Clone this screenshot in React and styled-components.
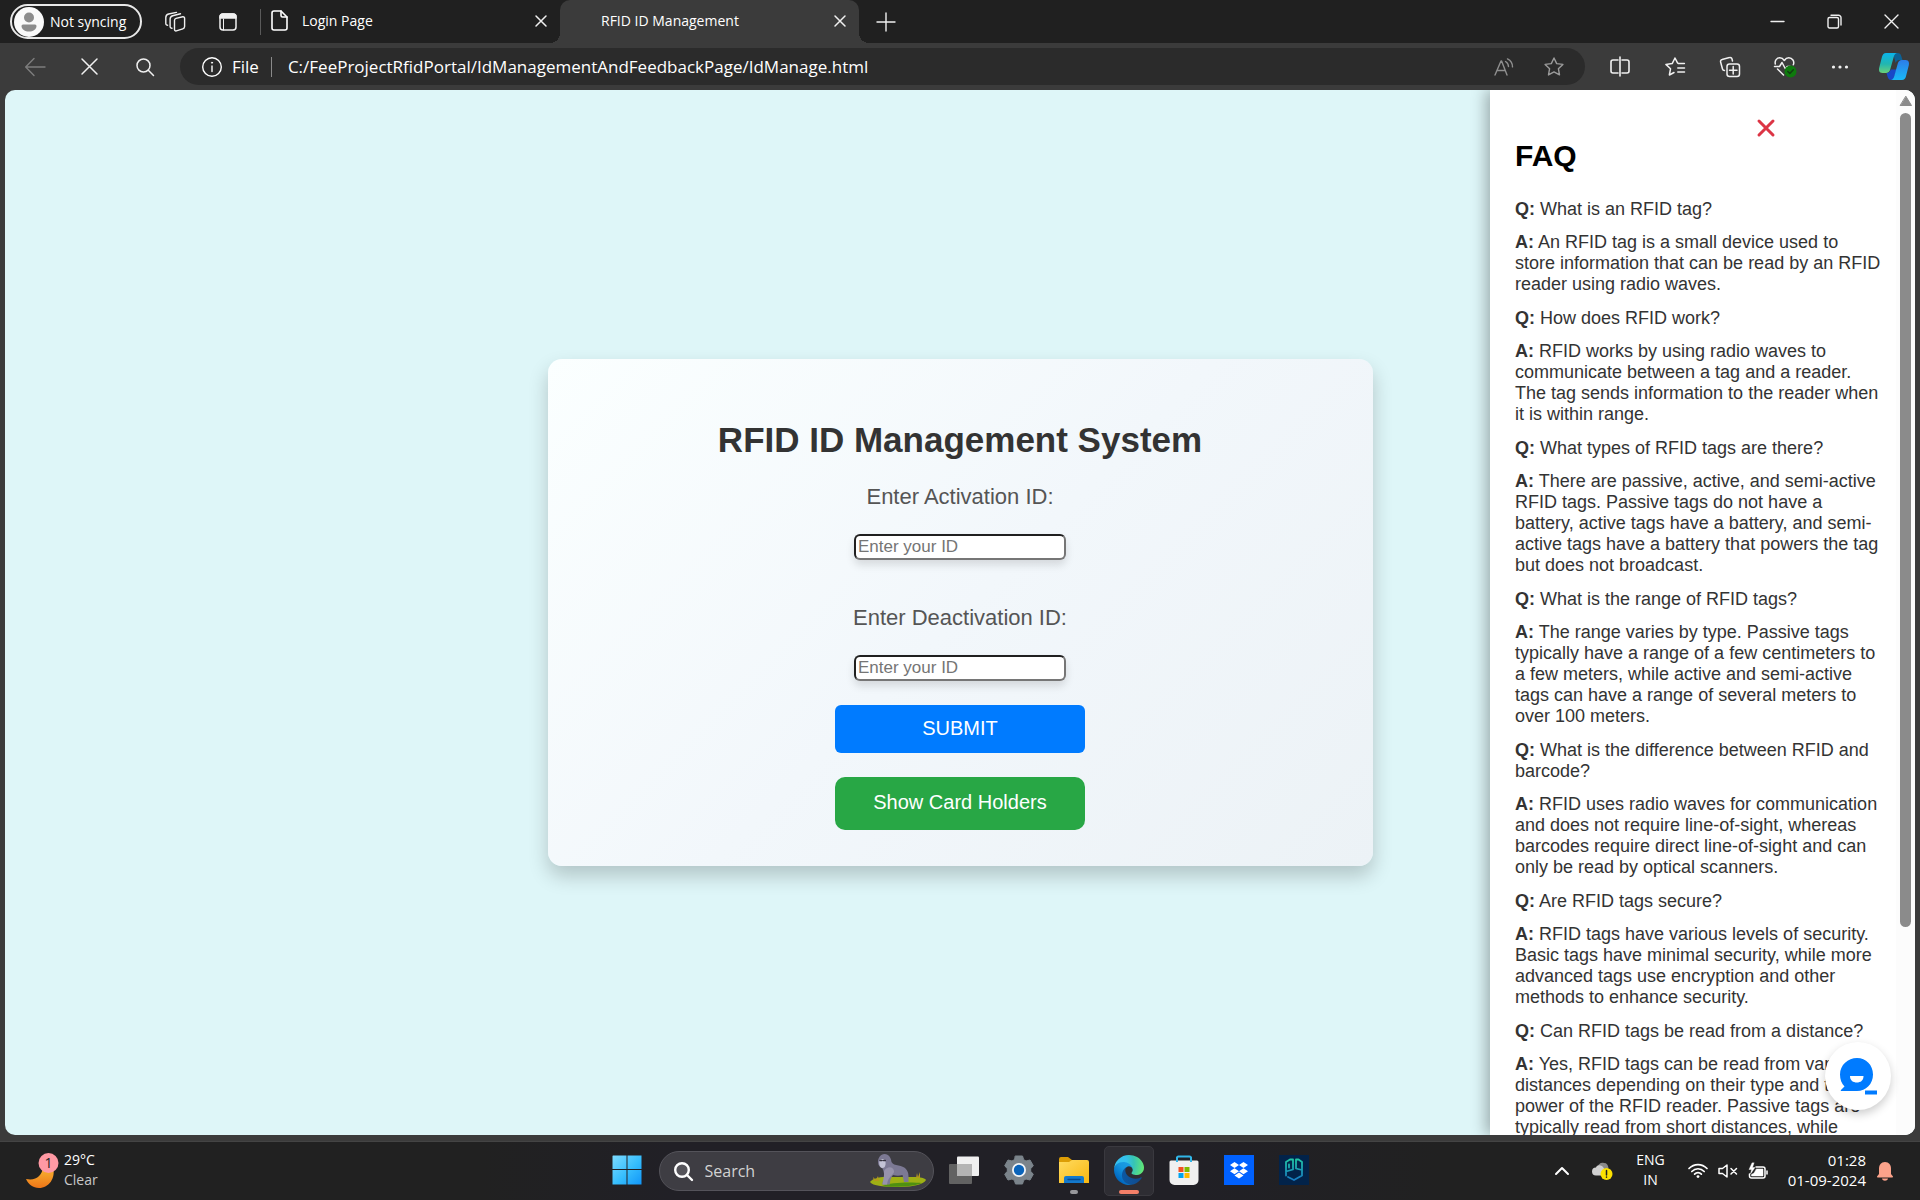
import React from "react";
import styled, { createGlobalStyle } from "styled-components";

const UI = '"Open Sans", "Noto Sans", sans-serif';
const BODY = '"Liberation Sans", Arial, sans-serif';

const GlobalStyle = createGlobalStyle`
  *, *::before, *::after { box-sizing: border-box; }
  body { margin: 0; background: #3b3b3b; font-family: ${BODY}; overflow: hidden; }
  h1, h2, p { margin: 0; }
  button { font: inherit; color: inherit; border: 0; padding: 0; background: none; cursor: pointer; }
  svg { display: block; flex: none; overflow: visible; }
`;

const Desktop = styled.div`
  display: flex;
  flex-direction: column;
  height: 100vh;
`;

/* ---------- browser tab strip ---------- */

const TabStrip = styled.header`
  display: flex;
  align-items: center;
  height: 43px;
  flex: none;
  padding-left: 10px;
  background: #202020;
  color: #fff;
  font: 14px/20px ${UI};
`;

const Profile = styled.button`
  display: flex;
  align-items: center;
  gap: 6px;
  width: 132px;
  height: 35px;
  margin-right: 6px;
  padding-left: 2px;
  border: 2px solid #e8e8e8;
  border-radius: 18px;
  white-space: nowrap;
`;

const IconButton = styled.button`
  display: grid;
  place-items: center;
  flex: none;
  width: ${(p) => p.$width || 55}px;
  height: 36px;
  color: ${(p) => p.$color || "#f0f0f0"};
`;

const StripDivider = styled.span`
  width: 1px;
  height: 26px;
  margin-left: 6px;
  background: #5a5a5a;
`;

const Tab = styled.div`
  position: relative;
  display: flex;
  align-items: center;
  align-self: stretch;
  gap: 14px;
  width: 299px;
  padding: 0 9px 2px ${(p) => (p.$active ? 41 : 10)}px;
  background: ${(p) => (p.$active ? "#3b3b3b" : "transparent")};
  border-radius: 10px 10px 0 0;

  &::before, &::after {
    content: "";
    display: ${(p) => (p.$active ? "block" : "none")};
    position: absolute;
    bottom: 0;
    width: 10px;
    height: 10px;
  }
  &::before { right: 100%; background: radial-gradient(circle at 0 0, transparent 10px, #3b3b3b 10px); }
  &::after { left: 100%; background: radial-gradient(circle at 100% 0, transparent 10px, #3b3b3b 10px); }
`;

const TabTitle = styled.span`
  flex: 1;
  white-space: nowrap;
`;

const Spacer = styled.span`
  flex: 1;
`;

/* ---------- browser toolbar ---------- */

const Toolbar = styled.nav`
  display: flex;
  align-items: center;
  height: 47px;
  flex: none;
  padding-left: 7px;
  background: #3b3b3b;
`;

const AddressBar = styled.div`
  display: flex;
  align-items: center;
  flex: 1;
  height: 37px;
  margin: 0 7px 0 8px;
  padding: 0 6px 0 22px;
  border-radius: 19px;
  background: #2b2b2b;
  color: #fff;
  font: 17px/22px ${UI};
`;

const Scheme = styled.span`
  margin: 0 12px 0 10px;
`;

const AddressDivider = styled.span`
  width: 1px;
  height: 20px;
  margin-right: 16px;
  background: #8a8a8a;
`;

const AddressInput = styled.input`
  flex: 1;
  min-width: 0;
  padding: 0;
  border: 0;
  outline: 0;
  background: none;
  color: inherit;
  font: inherit;
`;

/* ---------- web page ---------- */

const Page = styled.main`
  position: relative;
  display: grid;
  place-items: center;
  flex: 1;
  min-height: 0;
  margin: 0 5px 6px;
  border-radius: 10px;
  overflow: hidden;
  background: #def6f8;
`;

const Card = styled.form`
  display: flex;
  flex-direction: column;
  align-items: center;
  gap: 24px;
  width: 825px;
  max-width: 90%;
  padding: 61px 40px 36px;
  border-radius: 14px;
  background: linear-gradient(135deg, #fbffff 0%, #f2f7fb 50%, #ecf2f6 100%);
  box-shadow: 0 10px 20px rgba(0, 0, 0, 0.2);
`;

const CardTitle = styled.h1`
  color: #333;
  font-size: 35px;
  line-height: 40px;
`;

const Field = styled.div`
  display: flex;
  flex-direction: column;
  align-items: center;
  gap: 24px;

  & + & { margin-top: 21px; }
`;

const FieldLabel = styled.label`
  color: #555;
  font-size: 22px;
  line-height: 26px;
`;

const TextBox = styled.input`
  width: 212px;
  height: 26px;
  padding: 0 2px;
  border: 2px solid;
  border-color: #202020 #767676 #767676 #202020;
  border-radius: 6px;
  outline: 0;
  background: #fff;
  box-shadow: 0 5px 8px rgba(0, 0, 0, 0.12);
  font: 17px/20px ${BODY};

  &::placeholder { color: #757575; opacity: 1; }
`;

const ActionButton = styled.button`
  width: 250px;
  height: ${(p) => (p.$secondary ? 53 : 48)}px;
  padding-bottom: 3px;
  border-radius: ${(p) => (p.$secondary ? 10 : 6)}px;
  background: ${(p) => (p.$secondary ? "#28a745" : "#007bff")};
  color: #fff;
  font: 20px/24px ${BODY};
`;

const FaqPanel = styled.aside`
  position: absolute;
  inset: 0 0 0 auto;
  display: flex;
  width: 425px;
  background: #fff;
  box-shadow: -4px 0 14px rgba(0, 0, 0, 0.3);
`;

const FaqBody = styled.div`
  display: flex;
  flex-direction: column;
  flex: 1;
  min-width: 0;
  padding: 27px 13px 0 25px;
  overflow: hidden;
`;

const FaqClose = styled.button`
  display: grid;
  place-items: center;
  flex: none;
  align-self: flex-end;
  width: 22px;
  height: 22px;
  margin-right: 106px;
  color: #dc3545;
`;

const FaqTitle = styled.h2`
  margin-bottom: 26px;
  color: #000;
  font-size: 30px;
  line-height: 34px;
`;

const FaqLine = styled.p`
  flex: none;
  margin-bottom: ${(p) => (p.$answer ? 13 : 12)}px;
  color: #333;
  font-size: 18px;
  line-height: 21px;
`;

const ScrollTrack = styled.div`
  display: flex;
  flex-direction: column;
  align-items: center;
  gap: 7px;
  width: 19px;
  padding: 6px 0 208px;
  background: #fcfcfc;
`;

const ScrollThumb = styled.div`
  flex: 1;
  width: 11px;
  border-radius: 6px;
  background: #8b8b8b;
`;

const ChatButton = styled.button`
  position: absolute;
  right: 24px;
  bottom: 25px;
  display: grid;
  place-items: center;
  width: 66px;
  height: 68px;
  border-radius: 50%;
  background: #fff;
  box-shadow: 0 4px 10px rgba(0, 0, 0, 0.2);
`;

/* ---------- taskbar ---------- */

const Taskbar = styled.footer`
  display: grid;
  grid-template-columns: 1fr auto 1fr;
  align-items: center;
  height: 59px;
  flex: none;
  border-top: 1px solid #444;
  background: linear-gradient(90deg, #212121 0, #212121 25%, #212026 35%, #212026 62%, #212121 75%);
  color: #fff;
  font: 14px/20px ${UI};
`;

const Weather = styled.button`
  display: flex;
  align-items: center;
  gap: 4px;
  justify-self: start;
  padding-left: 25px;
  text-align: left;
`;

const Stack = styled.span`
  display: flex;
  flex-direction: column;
  align-items: ${(p) => p.$align || "flex-start"};
  padding-bottom: 2px;
`;

const Muted = styled.span`
  color: #c8c8c8;
`;

const Clock = styled(Stack)`
  font-size: 15px;
`;

const Apps = styled.div`
  display: flex;
  align-items: center;
  gap: 5px;
`;

const AppButton = styled.button`
  display: flex;
  flex-direction: column;
  align-items: center;
  justify-content: flex-end;
  gap: 5px;
  width: 50px;
  height: 50px;
  padding-bottom: 1px;
  border-radius: 5px;
  border: 1px solid ${(p) => (p.$active ? "#3a393f" : "transparent")};
  background: ${(p) => (p.$active ? "#2e2d33" : "transparent")};
`;

const AppMark = styled.span`
  width: ${(p) => (p.$state === "active" ? 20 : 8)}px;
  height: 4px;
  border-radius: 2px;
  background: ${(p) => (p.$state === "active" ? "#f47f68" : p.$state === "open" ? "#98989c" : "transparent")};
`;

const SearchBox = styled.label`
  display: flex;
  align-items: center;
  gap: 12px;
  width: 275px;
  height: 40px;
  margin-left: 2px;
  padding: 0 7px 0 14px;
  border: 1px solid #54535a;
  border-radius: 20px;
  background: #3e3d43;
`;

const SearchInput = styled.input`
  flex: 1;
  min-width: 0;
  padding: 0;
  border: 0;
  outline: 0;
  background: none;
  color: #fff;
  font: 16px/22px ${UI};

  &::placeholder { color: #d2d2d2; opacity: 1; }
`;

const Tray = styled.div`
  display: flex;
  align-items: center;
  justify-self: end;
  padding-right: 27px;
`;

const TrayButton = styled.button`
  display: flex;
  align-items: center;
  gap: 10px;
  margin-left: ${(p) => p.$space}px;
`;

/* ---------- icons ---------- */

const Icon = ({ w = 20, h = w, box = `0 0 ${w} ${h}`, children, stroke = 1.4 }) => (
  <svg width={w} height={h} viewBox={box} fill="none" stroke="currentColor" strokeWidth={stroke}
    strokeLinecap="round" strokeLinejoin="round" aria-hidden="true">
    {children}
  </svg>
);

const Cross = ({ size = 10, stroke = 1.5 }) => (
  <Icon w={size} stroke={stroke}><path d={`M0 0L${size} ${size}M${size} 0L0 ${size}`} /></Icon>
);

const Avatar = () => (
  <Icon w={30} stroke={0}>
    <circle cx="15" cy="15" r="15" fill="#fafafa" />
    <circle cx="15" cy="10.500" r="5" fill="#8c8c8c" />
    <path d="M9 17.500h12a1.500 1.500 0 0 1 1.500 1.500c0 3.500-3.500 5.500-7.500 5.500s-7.500-2-7.500-5.500a1.500 1.500 0 0 1 1.500-1.500z" fill="#8c8c8c" />
  </Icon>
);

const Workspaces = () => (
  <Icon>
    <path d="M9.500 8.300a2 2 0 0 1 1.500-1.900l6.800-1.600a1.500 1.500 0 0 1 1.800 1.500v8.200a2.500 2.500 0 0 1-1.800 2.300l-6.500 2.100a1.400 1.400 0 0 1-1.800-1.300z" />
    <path d="M7 16.300a1.800 1.800 0 0 1-1.900-1.800V7A3.500 3.500 0 0 1 7.700 3.700l7.800-1.900" />
    <path d="M2.600 13.200a1.800 1.800 0 0 1-1.800-1.800V5.700A3.800 3.800 0 0 1 3.600 2L11.500.4" />
  </Icon>
);

const TabActions = () => (
  <Icon w={18} stroke={1.5}>
    <rect x="1" y="1" width="16" height="16" rx="3" />
    <path d="M1 5V4a3 3 0 0 1 3-3h10a3 3 0 0 1 3 3v1z" fill="currentColor" />
    <path d="M4.500 6v11" strokeWidth="1" />
  </Icon>
);

const FileIcon = () => (
  <Icon w={17} h={21} stroke={1.6}>
    <path d="M3 1h7l6 6v11a2 2 0 0 1-2 2H3a2 2 0 0 1-2-2V3a2 2 0 0 1 2-2z" />
    <path d="M10 1v4.500A1.500 1.500 0 0 0 11.500 7H16" />
  </Icon>
);

const InfoIcon = () => (
  <Icon>
    <circle cx="10" cy="10" r="9.300" />
    <path d="M10 9v5.500" />
    <circle cx="10" cy="5.700" r=".6" fill="currentColor" strokeWidth=".8" />
  </Icon>
);

const Magnifier = () => (
  <Icon w={18} stroke={1.5}><circle cx="7.500" cy="7.500" r="6.500" /><path d="M12.300 12.300L17.500 17.500" /></Icon>
);

const ReadAloud = () => (
  <Icon w={20} h={18}>
    <path d="M1 17L7 3h.6L13 17M3 12.500h8.300" />
    <path d="M11.500 3.500c2 1.200 3 2.800 3 5M13.500.9c3.500 1.800 5 4.500 5 8" />
  </Icon>
);

const Star = () => (
  <Icon><path d="M10 1l2.700 5.600 6.200.8-4.500 4.300 1.100 6.200L10 14.900 4.500 17.900l1.100-6.200L1.100 7.400l6.200-.8z" /></Icon>
);

const SplitScreen = () => (
  <Icon stroke={1.6}>
    <path d="M8 3H3a2 2 0 0 0-2 2v9a2 2 0 0 0 2 2h5M12 3h5a2 2 0 0 1 2 2v9a2 2 0 0 1-2 2h-5M10 0v19" />
  </Icon>
);

const Favorites = () => (
  <Icon stroke={1.5}>
    <path d="M12.500 5.900L10 1 7.200 6.600.9 7.400l4.600 4.400-1.100 6.200L9 15.500M12.500 5.900l1 .7h5.900M12.800 11h6.700M12.800 15h6.700" />
  </Icon>
);

const Collections = () => (
  <Icon stroke={1.5}>
    <rect x="7" y="7" width="12.500" height="12.500" rx="2.500" />
    <path d="M13.200 9.500v7.500M9.500 13.200H17" />
    <path d="M4.500 13.500a2 2 0 0 1-2-1.500L.6 5a2 2 0 0 1 1.500-2.500L9.500.6A2 2 0 0 1 12 2l.5 2" />
  </Icon>
);

const Essentials = () => (
  <Icon w={22} h={20} stroke={1.5}>
    <path d="M1.300 7C.5 3.500 2.800.8 5.800.8 8 .8 9.300 2 10.300 3.500 11.300 2 12.600.8 14.800.8c3.500 0 6 3.500 4.500 7M3.500 12l6 6" />
    <path d="M.5 9.500h5L8 5.500l3.500 6.500 1.800-2.500h3" />
    <circle cx="16.500" cy="14.500" r="6" fill="#0e7a0d" stroke="none" />
    <path d="M13.800 14.500l2 2 3.500-3.700" stroke="#123d12" />
  </Icon>
);

const Copilot = () => (
  <Icon w={30} h={27} stroke={0}>
    <defs>
      <linearGradient id="copL" x1="0" y1="0" x2="0" y2="1"><stop stopColor="#0bb4ea" /><stop offset=".55" stopColor="#22b6b0" /><stop offset="1" stopColor="#6ad07a" /></linearGradient>
      <linearGradient id="copR" x1="0" y1="0" x2="0" y2="1"><stop stopColor="#2d7ce8" /><stop offset="1" stopColor="#19b9f8" /></linearGradient>
    </defs>
    <path d="M14 0h4.500c2.200 0 3.200 1.200 3.800 3.200l1.200 3.800h-3c-2 0-3.200 1-3.800 3z" fill="#0c6195" />
    <path d="M7 0h11c-2 .5-2.700 2-3.300 4l-3.500 12.500c-.7 2.300-1.800 3.500-4.200 3.500H3.500C0 20-.5 17 .4 14L3 3.800C3.700 1.300 4.800 0 7 0z" fill="url(#copL)" />
    <path d="M7.500 20c2.500 0 3.500-1.200 4.200-3.500h6L15.500 23c-.7 2.500-1.500 4-3.500 4-3 0-3.200-3-4.500-7z" fill="#1848c8" />
    <path d="M23 27H12c2-.5 2.700-2 3.300-4l3.500-12.500C19.500 8.200 20.600 7 23 7h3.500C30 7 30.500 10 29.600 13L27 23.200c-.7 2.500-1.800 3.800-4 3.800z" fill="url(#copR)" />
  </Icon>
);

const ChatIcon = () => (
  <Icon w={36} h={36} stroke={0}>
    <path d="M17 0C26 0 33 7 33 16.500S26 33 17 33H1.500c-1 0-1-.8-.3-1.300L4.500 28.500C1.500 25.500 0 21.500 0 16.500 0 7 8 0 17 0z" fill="#007bff" />
    <path d="M10 18h13.500c0 4.500-3 6.500-6.700 6.500S10 22.500 10 18z" fill="#fff" />
    <rect x="25" y="32.500" width="12" height="4" fill="#007bff" />
  </Icon>
);

const Moon = () => (
  <Icon w={35} h={36} stroke={0}>
    <defs><linearGradient id="moon" x1="0" y1="0" x2="0" y2="1"><stop stopColor="#f8b832" /><stop offset="1" stopColor="#ee7518" /></linearGradient></defs>
    <path d="M28 14c3 11-4 21-14 21C8 35 3.500 31.500 1 26c10 2 16-3 17-12z" fill="url(#moon)" />
    <circle cx="23.500" cy="10" r="10" fill="#ff99a4" />
    <text x="23.500" y="15" textAnchor="middle" fontFamily="Open Sans, sans-serif" fontSize="14" fill="#222">1</text>
  </Icon>
);

const Windows = () => (
  <Icon w={30} stroke={0}>
    <defs><linearGradient id="win" gradientUnits="userSpaceOnUse" x1="0" y1="0" x2="30" y2="30"><stop stopColor="#7fdcff" /><stop offset=".55" stopColor="#35bdfd" /><stop offset="1" stopColor="#1094f8" /></linearGradient></defs>
    <path d="M1 .5h13.500v13.500H.5V1zM15.500.5h14V14h-14zM.5 15h14v14.500H.5zM15.500 15h14v14.500h-14z" fill="url(#win)" />
  </Icon>
);

const Gorilla = () => (
  <Icon w={56} h={34} stroke={0}>
    <path d="M0 28c2-3 8-5 16-5h28c6 0 11 1 12 3-2 4-12 7-26 7C15 33 2 32 0 28z" fill="#9fb015" />
    <path d="M12 32c8-4 30-4 40-3-6 3-28 5-40 3z" fill="#4f9010" />
    <path d="M4 27l-1-4 3 3 2-4 1 5zM46 24l1-5 1 4 2-5v6z" fill="#b59a1c" />
    <path d="M8 8c0-4 2.500-8 6.500-8 4.500 0 6.500 4 7 8 1.500 2.500 3.500 3 7 3.500 6 .8 10 4.500 10 10.500v6h-4.500l-1.500-7c-3 1-6 1-9.500 0-2 2.500-3 5-3.200 9.500h-7.300c-.5-2 .5-3.500 1.500-5 .5-4 0-8-1.500-11C9.500 13 8 11.500 8 8z" fill="#7c7994" />
    <path d="M9.200 9c0-2.500 1-4 3.200-4s3.600 2 3.200 5-1.600 4-3.200 4-3.200-2-3.200-5z" fill="#c3c3d6" />
    <path d="M14 17c3-5 9-5 10 0 .5 4-6 5-7 13.500h-4.500c.5-4 2-9 1.500-13.500z" fill="#9793ac" />
    <path d="M10 6.500h2M13.500 6.500h1.800" stroke="#35323f" strokeWidth="1.500" />
  </Icon>
);

const TaskView = () => (
  <Icon w={30} stroke={0}>
    <rect x="8" y="1.500" width="22" height="19.500" rx="1" fill="#f0f0f0" />
    <rect x="0" y="9" width="23" height="20" rx="1" fill="#626262" />
    <path d="M8 9h15v12H8z" fill="#b4b4b4" />
  </Icon>
);

const Settings = () => (
  <Icon w={30} stroke={0}>
    <path d="M11.500 1h7l1.200 3.700 2.300 1.300 4-1 3.300 5.700-2.600 3v2.600l2.600 3L26 25l-4-1-2.300 1.300L18.500 29h-7l-1.200-3.700L8 24l-4 1-3.300-5.700 2.600-3v-2.600l-2.600-3L4 5l4 1 2.300-1.300z" fill="#7b848b" stroke="#7b848b" strokeWidth="1" />
    <circle cx="15" cy="15" r="7" fill="#f1f4f7" /><circle cx="15" cy="15" r="5.200" fill="#0a64ba" />
  </Icon>
);

const Explorer = () => (
  <Icon w={30} stroke={0}>
    <defs><linearGradient id="fold" x1="0" y1="0" x2="1" y2="1"><stop stopColor="#ffdb60" /><stop offset="1" stopColor="#f9b710" /></linearGradient></defs>
    <path d="M0 4a2 2 0 0 1 2-2h7l4 3h15v6H0z" fill="#dc9d05" />
    <path d="M0 7h10l3-2h15a2 2 0 0 1 2 2v21H0z" fill="url(#fold)" />
    <path d="M5 28v-5a2 2 0 0 1 2-2h16a2 2 0 0 1 2 2v5z" fill="#1479cc" />
    <path d="M9 24.500h12" stroke="#07498e" strokeWidth="1.300" />
  </Icon>
);

const Edge = () => (
  <Icon w={30} box="4.600 4.900 256 256" stroke={0}>
    <defs>
      <linearGradient id="edA" x1="63" y1="177" x2="241" y2="177" gradientUnits="userSpaceOnUse"><stop stopColor="#0c59a4" /><stop offset="1" stopColor="#114a8b" /></linearGradient>
      <linearGradient id="edB" x1="157" y1="100" x2="46" y2="221" gradientUnits="userSpaceOnUse"><stop stopColor="#1b9de2" /><stop offset=".4" stopColor="#1595df" /><stop offset="1" stopColor="#0067bf" /></linearGradient>
      <radialGradient id="edC" cx="30" cy="70" r="240" gradientUnits="userSpaceOnUse"><stop stopColor="#35c1f1" /><stop offset=".35" stopColor="#34c1ed" /><stop offset=".6" stopColor="#36c3b6" /><stop offset="1" stopColor="#66eb6e" /></radialGradient>
    </defs>
    <path fill="url(#edA)" d="M235.680 195.460a93.730 93.730 0 0 1-10.540 4.710 101.870 101.870 0 0 1-35.900 6.460c-47.320 0-88.540-32.550-88.540-74.320A31.480 31.480 0 0 1 117.130 105c-42.800 1.800-53.800 46.400-53.800 72.530 0 73.880 68.090 81.370 82.760 81.370 7.910 0 19.840-2.300 27-4.560l1.310-.44a128.340 128.340 0 0 0 66.600-52.800 4 4 0 0 0-5.320-5.640z" />
    <path fill="url(#edB)" d="M110.340 246.340A79.200 79.200 0 0 1 87.600 225a80.720 80.720 0 0 1 29.530-120c3.120-1.470 8.450-4.130 15.540-4a32.350 32.350 0 0 1 25.690 13 31.880 31.880 0 0 1 6.360 18.660c0-.21 24.460-79.600-80-79.600-43.900 0-80 41.660-80 78.210a130.150 130.150 0 0 0 12.110 56 128 128 0 0 0 156.380 67.110 75.550 75.550 0 0 1-62.780-8z" />
    <path fill="url(#edC)" d="M156.940 153.780c-.81 1.050-3.300 2.500-3.300 5.660 0 2.610 1.700 5.120 4.720 7.230 14.380 10 41.490 8.680 41.560 8.680a59.560 59.560 0 0 0 30.270-8.350 61.380 61.380 0 0 0 30.430-52.880c.26-22.410-8-37.310-11.340-43.910-21.190-41.440-66.920-65.280-116.650-65.280a128 128 0 0 0-128 126.200c.48-36.540 36.800-66.050 80-66.050 3.500 0 23.460.34 42 10.070 16.340 8.580 24.900 18.940 30.850 29.210 6.180 10.670 7.280 24.150 7.280 29.520s-2.740 13.330-7.800 19.900z" />
  </Icon>
);

const Store = () => (
  <Icon w={30} stroke={0}>
    <path d="M8 7V3a1.500 1.500 0 0 1 1.500-1.500h11A1.500 1.500 0 0 1 22 3v4" stroke="#31b6e8" strokeWidth="2" />
    <path d="M.5 7A1.500 1.500 0 0 1 2 5.500h26A1.500 1.500 0 0 1 29.500 7v18a5 5 0 0 1-5 5h-19a5 5 0 0 1-5-5z" fill="#f0f0f0" />
    <path d="M7 2h2v5H7zM21 2h2v5h-2z" fill="#31b6e8" />
    <path d="M9.500 12h5v5h-5z" fill="#f25022" /><path d="M15.500 12h5v5h-5z" fill="#7fba00" />
    <path d="M9.500 18h5v5h-5z" fill="#00a4ef" /><path d="M15.500 18h5v5h-5z" fill="#ffb900" />
  </Icon>
);

const Dropbox = () => (
  <Icon w={30} stroke={0}>
    <path d="M0 0h30v30H0z" fill="#0061ff" />
    <path d="M10.500 7l4.500 3-4.500 3L6 10zM19.500 7l4.500 3-4.500 3-4.500-3zM10.500 13.200l4.500 3-4.500 3-4.500-3zM19.500 13.200l4.500 3-4.500 3-4.500-3zM15 17.500l4.500 3-4.500 3-4.500-3z" fill="#fff" />
  </Icon>
);

const GameVault = () => (
  <Icon w={30} stroke={0}>
    <defs><linearGradient id="gv" gradientUnits="userSpaceOnUse" x1="0" y1="3" x2="0" y2="26"><stop stopColor="#22c9a4" /><stop offset="1" stopColor="#1677c4" /></linearGradient></defs>
    <path d="M0 0h30v30H0z" fill="#02234a" />
    <path d="M7 20.500V7l4-2.500h3v10L7 16.500M23 15l-6-1.500v-9h2.500L23 7v13.500L15 25l-6-3M10 9.500v3" stroke="url(#gv)" strokeWidth="1.800" />
  </Icon>
);

const Cloud = () => (
  <Icon w={21} h={18} stroke={0}>
    <path d="M5 6C6 2 9 0 12 1c3 0 4 2 4.500 5L9 12z" fill="#8a8a8a" />
    <path d="M4 13.500a4 4 0 0 1 0-8c1-3 6-3 8 1l4 7z" fill="#d0d0d0" />
    <circle cx="14.500" cy="12" r="6" fill="#fce100" />
    <path d="M14.500 8.500v4.500M14.500 15v.3" stroke="#222" strokeWidth="1.500" />
  </Icon>
);

const Wifi = () => (
  <Icon w={20} h={16} stroke={1.7}>
    <path d="M1 5.500C6 .2 14 .2 19 5.500M3.800 8.500c3.500-3.700 8.900-3.700 12.400 0M6.600 11.200c2-2 4.800-2 6.800 0" />
    <circle cx="10" cy="13.600" r="1.400" fill="currentColor" stroke="none" />
  </Icon>
);

const Mute = () => (
  <Icon w={20} h={14} stroke={1.500}>
    <path d="M1 4.500h3.500L9 1v12L4.500 9.500H1zM13 4.500l5.500 5.500M18.500 4.500L13 10" />
  </Icon>
);

const Battery = () => (
  <Icon w={20} h={17} stroke={1.500}>
    <path d="M8 4h7a2 2 0 0 1 2 2v7a2 2 0 0 1-2 2H3.500a2 2 0 0 1-2-2v-2M19 8v3" />
    <path d="M8.500 6H15v7H3.500v-1.500L6 10z" fill="currentColor" strokeWidth=".5" />
    <path d="M4 0L1 6.500h2.500L2.500 11 7 4.500H4.500L6 0z" fill="currentColor" strokeWidth=".4" />
  </Icon>
);

const Bell = () => (
  <Icon w={16} h={19} stroke={0}>
    <path d="M8 0c4 0 6 3 6 6.500V12l2 2.500c0 .8-.4 1-1 1H1c-.6 0-1-.2-1-1L2 12V6.500C2 3 4 0 8 0zM5 16.500h6c-.5 3-5.500 3-6 0z" fill="#fba28a" />
  </Icon>
);

/* ---------- data ---------- */

const FAQ = [
  ["What is an RFID tag?", "An RFID tag is a small device used to store information that can be read by an RFID reader using radio waves."],
  ["How does RFID work?", "RFID works by using radio waves to communicate between a tag and a reader. The tag sends information to the reader when it is within range."],
  ["What types of RFID tags are there?", "There are passive, active, and semi-active RFID tags. Passive tags do not have a battery, active tags have a battery, and semi-active tags have a battery that powers the tag but does not broadcast."],
  ["What is the range of RFID tags?", "The range varies by type. Passive tags typically have a range of a few centimeters to a few meters, while active and semi-active tags can have a range of several meters to over 100 meters."],
  ["What is the difference between RFID and barcode?", "RFID uses radio waves for communication and does not require line-of-sight, whereas barcodes require direct line-of-sight and can only be read by optical scanners."],
  ["Are RFID tags secure?", "RFID tags have various levels of security. Basic tags have minimal security, while more advanced tags use encryption and other methods to enhance security."],
  ["Can RFID tags be read from a distance?", "Yes, RFID tags can be read from varying distances depending on their type and the power of the RFID reader. Passive tags are typically read from short distances, while"],
];

const APPS = [
  ["Task view", TaskView],
  ["Settings", Settings],
  ["File Explorer", Explorer, "open"],
  ["Microsoft Edge", Edge, "active"],
  ["Microsoft Store", Store],
  ["Dropbox", Dropbox],
  ["PG", GameVault],
];

export default function App() {
  return (
    <Desktop>
      <GlobalStyle />

      <TabStrip>
        <Profile><Avatar />Not syncing</Profile>
        <IconButton $width={53} aria-label="Workspaces"><Workspaces /></IconButton>
        <IconButton $width={53} aria-label="Tab actions"><TabActions /></IconButton>
        <StripDivider />
        <Tab>
          <FileIcon />
          <TabTitle>Login Page</TabTitle>
          <IconButton $width={20} aria-label="Close Login Page"><Cross /></IconButton>
        </Tab>
        <Tab $active>
          <TabTitle>RFID ID Management</TabTitle>
          <IconButton $width={20} aria-label="Close RFID ID Management"><Cross /></IconButton>
        </Tab>
        <IconButton $width={53} aria-label="New tab">
          <Icon w={18}><path d="M9 0v18M0 9h18" /></Icon>
        </IconButton>
        <Spacer />
        <IconButton $width={57} aria-label="Minimize"><Icon w={13} h={1}><path d="M0 .5h13" /></Icon></IconButton>
        <IconButton $width={57} aria-label="Restore">
          <Icon w={13}><rect x="0" y="2.500" width="10.500" height="10.500" rx="1.500" /><path d="M3 .3h7.500A2.500 2.500 0 0 1 13 2.800V10" /></Icon>
        </IconButton>
        <IconButton $width={57} aria-label="Close window"><Cross size={13} stroke={1.4} /></IconButton>
      </TabStrip>

      <Toolbar>
        <IconButton aria-label="Back" $color="#7d7d7d">
          <Icon w={20} h={18}><path d="M20 9H1M9 .5L.7 9 9 17.500" /></Icon>
        </IconButton>
        <IconButton aria-label="Stop"><Cross size={15} /></IconButton>
        <IconButton aria-label="Search"><Magnifier /></IconButton>
        <AddressBar>
          <InfoIcon />
          <Scheme>File</Scheme>
          <AddressDivider />
          <AddressInput aria-label="Address" defaultValue="C:/FeeProjectRfidPortal/IdManagementAndFeedbackPage/IdManage.html" />
          <IconButton $width={50} $color="#8f8f8f" aria-label="Read aloud"><ReadAloud /></IconButton>
          <IconButton $width={50} $color="#9b9b9b" aria-label="Add to favorites"><Star /></IconButton>
        </AddressBar>
        <IconButton aria-label="Split screen"><SplitScreen /></IconButton>
        <IconButton aria-label="Favorites"><Favorites /></IconButton>
        <IconButton aria-label="Collections"><Collections /></IconButton>
        <IconButton aria-label="Browser essentials"><Essentials /></IconButton>
        <IconButton aria-label="More">
          <Icon w={16} h={4} stroke={0}><circle cx="1.500" cy="2" r="1.600" fill="currentColor" /><circle cx="8" cy="2" r="1.600" fill="currentColor" /><circle cx="14.500" cy="2" r="1.600" fill="currentColor" /></Icon>
        </IconButton>
        <IconButton $width={53} aria-label="Copilot"><Copilot /></IconButton>
      </Toolbar>

      <Page>
        <Card onSubmit={(e) => e.preventDefault()}>
          <CardTitle>RFID ID Management System</CardTitle>
          <Field>
            <FieldLabel htmlFor="activation">Enter Activation ID:</FieldLabel>
            <TextBox id="activation" placeholder="Enter your ID" />
          </Field>
          <Field>
            <FieldLabel htmlFor="deactivation">Enter Deactivation ID:</FieldLabel>
            <TextBox id="deactivation" placeholder="Enter your ID" />
          </Field>
          <ActionButton type="submit">SUBMIT</ActionButton>
          <ActionButton type="button" $secondary>Show Card Holders</ActionButton>
        </Card>

        <FaqPanel>
          <FaqBody>
            <FaqClose aria-label="Close FAQ"><Cross size={14} stroke={3} /></FaqClose>
            <FaqTitle>FAQ</FaqTitle>
            {FAQ.map(([question, answer]) => (
              <React.Fragment key={question}>
                <FaqLine><strong>Q:</strong> {question}</FaqLine>
                <FaqLine $answer><strong>A:</strong> {answer}</FaqLine>
              </React.Fragment>
            ))}
          </FaqBody>
          <ScrollTrack>
            <Icon w={12} h={10} stroke={1}><path d="M6 .5L11.500 9.500H.5z" fill="#8b8b8b" stroke="#8b8b8b" /></Icon>
            <ScrollThumb />
          </ScrollTrack>
        </FaqPanel>
        <ChatButton aria-label="Open chat"><ChatIcon /></ChatButton>
      </Page>

      <Taskbar>
        <Weather>
          <Moon />
          <Stack><span>29°C</span><Muted>Clear</Muted></Stack>
        </Weather>
        <Apps>
          <AppButton aria-label="Start"><Windows /><AppMark /></AppButton>
          <SearchBox>
            <Icon w={19} stroke={2.4}><circle cx="8" cy="8" r="6.800" fill="#55545a" /><path d="M13 13l5 5" /></Icon>
            <SearchInput placeholder="Search" aria-label="Search" />
            <Gorilla />
          </SearchBox>
          {APPS.map(([name, Glyph, state]) => (
            <AppButton key={name} aria-label={name} $active={state === "active"}>
              <Glyph />
              <AppMark $state={state} />
            </AppButton>
          ))}
        </Apps>
        <Tray>
          <TrayButton $space={0} aria-label="Hidden icons"><Icon w={14} h={8} stroke={2}><path d="M1 7l6-6 6 6" /></Icon></TrayButton>
          <TrayButton $space={23} aria-label="OneDrive"><Cloud /></TrayButton>
          <TrayButton $space={23}><Stack $align="center"><span>ENG</span><span>IN</span></Stack></TrayButton>
          <TrayButton $space={23} aria-label="Network, volume, battery"><Wifi /><Mute /><Battery /></TrayButton>
          <TrayButton $space={20}><Clock $align="flex-end"><span>01:28</span><span>01-09-2024</span></Clock></TrayButton>
          <TrayButton $space={11} aria-label="Notifications"><Bell /></TrayButton>
        </Tray>
      </Taskbar>
    </Desktop>
  );
}
